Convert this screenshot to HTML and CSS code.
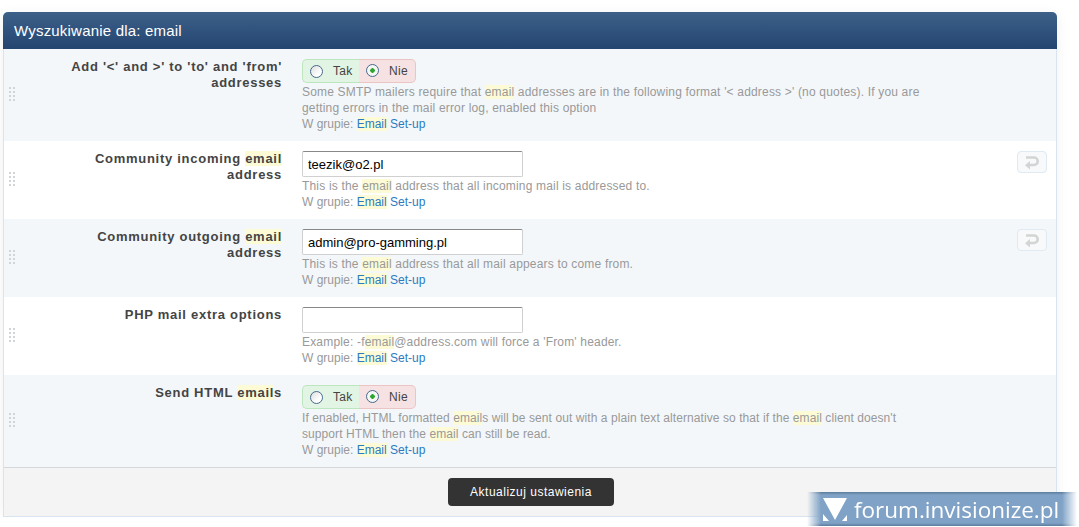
FILE: index.html
```html
<!DOCTYPE html>
<html lang="pl">
<head>
  <meta charset="UTF-8">
  <title>Wyszukiwanie dla: email</title>
  <link rel="stylesheet" href="styles.css">
</head>
<body>

  <div class="panel">
    <h2 class="naglowek">Wyszukiwanie dla: email</h2>

    <div class="wiersz parzysty">
      <svg class="uchwyt" width="6" height="14" viewBox="0 0 6 14"><path d="M0 0h2v2H0zM4 0h2v2H4zM0 4h2v2H0zM4 4h2v2H4zM0 8h2v2H0zM4 8h2v2H4zM0 12h2v2H0zM4 12h2v2H4z"/></svg>
      <div class="etykieta">Add '&lt;' and &gt;' to 'to' and 'from' addresses</div>
      <div class="pole">
        <div class="przelacznik">
          <label class="tak"><span class="radio"></span>Tak</label>
          <label class="nie"><span class="radio wybrany"></span>Nie</label>
        </div>
        <div class="opis">Some SMTP mailers require that <mark>email</mark> addresses are in the following format '&lt; address &gt;' (no quotes). If you are getting errors in the mail error log, enabled this option</div>
        <div class="opis grupa">W grupie: <a href="#"><mark>Email</mark> Set-up</a></div>
      </div>
    </div>

    <div class="wiersz">
      <svg class="uchwyt" width="6" height="14" viewBox="0 0 6 14"><path d="M0 0h2v2H0zM4 0h2v2H4zM0 4h2v2H0zM4 4h2v2H4zM0 8h2v2H0zM4 8h2v2H4zM0 12h2v2H0zM4 12h2v2H4z"/></svg>
      <div class="etykieta">Community incoming <mark>email</mark> address</div>
      <div class="pole">
        <input class="tekst" type="text" value="teezik@o2.pl">
        <div class="opis">This is the <mark>email</mark> address that all incoming mail is addressed to.</div>
        <div class="opis grupa">W grupie: <a href="#"><mark>Email</mark> Set-up</a></div>
      </div>
      <button class="cofnij"><svg width="16" height="15" viewBox="0 0 16 15"><path d="M2 2.500h8a3.500 3.500 0 0 1 0 7.500H5" fill="none" stroke="#d4d4d4" stroke-width="2.600"/><path d="M6 6v8.500L1 10.200z" fill="#d4d4d4"/></svg></button>
    </div>

    <div class="wiersz parzysty">
      <svg class="uchwyt" width="6" height="14" viewBox="0 0 6 14"><path d="M0 0h2v2H0zM4 0h2v2H4zM0 4h2v2H0zM4 4h2v2H4zM0 8h2v2H0zM4 8h2v2H4zM0 12h2v2H0zM4 12h2v2H4z"/></svg>
      <div class="etykieta">Community outgoing <mark>email</mark> address</div>
      <div class="pole">
        <input class="tekst" type="text" value="admin@pro-gamming.pl">
        <div class="opis">This is the <mark>email</mark> address that all mail appears to come from.</div>
        <div class="opis grupa">W grupie: <a href="#"><mark>Email</mark> Set-up</a></div>
      </div>
      <button class="cofnij"><svg width="16" height="15" viewBox="0 0 16 15"><path d="M2 2.500h8a3.500 3.500 0 0 1 0 7.500H5" fill="none" stroke="#d4d4d4" stroke-width="2.600"/><path d="M6 6v8.500L1 10.200z" fill="#d4d4d4"/></svg></button>
    </div>

    <div class="wiersz">
      <svg class="uchwyt" width="6" height="14" viewBox="0 0 6 14"><path d="M0 0h2v2H0zM4 0h2v2H4zM0 4h2v2H0zM4 4h2v2H4zM0 8h2v2H0zM4 8h2v2H4zM0 12h2v2H0zM4 12h2v2H4z"/></svg>
      <div class="etykieta">PHP mail extra options</div>
      <div class="pole">
        <input class="tekst" type="text" value="">
        <div class="opis">Example: -f<mark>email</mark>@address.com will force a 'From' header.</div>
        <div class="opis grupa">W grupie: <a href="#"><mark>Email</mark> Set-up</a></div>
      </div>
    </div>

    <div class="wiersz parzysty">
      <svg class="uchwyt" width="6" height="14" viewBox="0 0 6 14"><path d="M0 0h2v2H0zM4 0h2v2H4zM0 4h2v2H0zM4 4h2v2H4zM0 8h2v2H0zM4 8h2v2H4zM0 12h2v2H0zM4 12h2v2H4z"/></svg>
      <div class="etykieta">Send HTML <mark>email</mark>s</div>
      <div class="pole">
        <div class="przelacznik">
          <label class="tak"><span class="radio"></span>Tak</label>
          <label class="nie"><span class="radio wybrany"></span>Nie</label>
        </div>
        <div class="opis ciasny">If enabled, HTML formatted <mark>email</mark>s will be sent out with a plain text alternative so that if the <mark>email</mark> client doesn't support HTML then the <mark>email</mark> can still be read.</div>
        <div class="opis grupa">W grupie: <a href="#"><mark>Email</mark> Set-up</a></div>
      </div>
    </div>

    <div class="stopka">
      <button class="zapisz">Aktualizuj ustawienia</button>
    </div>
  </div>

  <!-- znak wodny -->
  <div class="znak">
    <svg width="24" height="23" viewBox="0 0 24 23"><path d="M0 0h24L12 22z" fill="#fff"/><path d="M0 16l6 7H0zM24 17l-5 6h5z" fill="#fff"/></svg>
    <span>forum.invisionize.pl</span>
  </div>

</body>
</html>
```

FILE: styles.css
```css
body {
  margin: 0;
  padding: 12px 0 0 3px;
  background-color: #fff;
  font-family: "Liberation Sans", Arial, sans-serif;
  font-size: 12px;
  color: #444;
}
mark {
  background-color: #fdfbd5;
  color: inherit;
}
.panel {
  width: 1054px;
  box-sizing: border-box;
  border: 1px solid #d8e5f1;
  border-top: 0;
  border-radius: 5px 5px 0 0;
  box-shadow: 0 2px 14px rgba(0, 0, 0, 0.06);
}
.naglowek {
  margin: 0 -1px;
  height: 37px;
  padding-left: 11px;
  font-size: 15px;
  font-weight: normal;
  line-height: 37px;
  letter-spacing: 0.2px;
  color: #fff;
  background: linear-gradient(#3d6089, #234570);
  border-radius: 5px 5px 0 0;
}
.wiersz {
  position: relative;
  display: flex;
  padding: 10px 0 9px;
  background-color: #fff;
}
.parzysty {
  background-color: #f3f7fa;
}
.uchwyt {
  position: absolute;
  left: 5px;
  top: 50%;
  margin-top: -8px;
  fill: #d2d5d8;
}
.etykieta {
  box-sizing: border-box;
  width: 278px;
  margin-right: 20px;
  padding-left: 58px;
  font-size: 13px;
  font-weight: bold;
  line-height: 16px;
  letter-spacing: 0.72px;
  text-align: right;
  color: #444;
}
.pole {
  width: 624px;
}
.przelacznik {
  display: flex;
  width: 114px;
  height: 24px;
  margin-bottom: 1px;
  color: #444;
  letter-spacing: 0.3px;
}
.przelacznik label {
  display: flex;
  align-items: center;
  box-sizing: border-box;
  height: 24px;
  width: 57px;
}
.przelacznik .tak {
  padding-left: 7px;
  background-color: #e2f4e3;
  border: 1px solid #bce6bd;
  border-right: 0;
  border-radius: 5px 0 0 5px;
}
.przelacznik .nie {
  padding-left: 7px;
  background-color: #f6e2e2;
  border: 1px solid #ebc4c4;
  border-left: 0;
  border-radius: 0 5px 5px 0;
}
.radio {
  box-sizing: border-box;
  flex: none;
  width: 13px;
  height: 13px;
  margin-right: 10px;
  border: 1.5px solid #46698f;
  border-radius: 50%;
  background: linear-gradient(135deg, #ddd, #fff 70%);
}
.przelacznik .wybrany {
  margin-top: -2px;
  background: radial-gradient(circle, #2fa52f 0 2px, #f4f7f4 2.500px);
}
.opis {
  line-height: 16px;
  letter-spacing: 0.18px;
  color: #999;
}
.ciasny {
  letter-spacing: 0.08px;
}
.grupa {
  letter-spacing: 0;
}
.opis a {
  color: #2b7bc0;
  text-decoration: none;
}
.tekst {
  display: block;
  box-sizing: border-box;
  width: 221px;
  height: 26px;
  margin: 0 0 1px;
  padding: 0 5px;
  border: 1px solid #d0d0d0;
  border-top-color: #888;
  border-radius: 2px;
  font-family: "Liberation Sans", Arial, sans-serif;
  font-size: 13px;
  color: #000;
  background-color: #fff;
}
.cofnij {
  position: absolute;
  right: 9px;
  top: 10px;
  display: flex;
  align-items: center;
  justify-content: center;
  width: 30px;
  height: 22px;
  padding: 0;
  border: 1px solid #dfeaf3;
  border-radius: 4px;
  background-color: #f7f9fb;
}
.stopka {
  display: flex;
  justify-content: center;
  padding: 10px 0 10px 2px;
  background-color: #f4f4f4;
  border-top: 1px solid #d5d8da;
}
.zapisz {
  width: 166px;
  height: 28px;
  padding: 0;
  border: 0;
  border-radius: 4px;
  font-family: "Liberation Sans", Arial, sans-serif;
  font-size: 12px;
  letter-spacing: 0.5px;
  color: #fff;
  background-color: #333;
}
.znak {
  position: absolute;
  left: 807px;
  top: 492px;
  display: flex;
  align-items: center;
  gap: 7px;
  box-sizing: border-box;
  width: 270px;
  height: 34px;
  padding-left: 16px;
  font-family: "Open Sans", sans-serif;
  font-size: 22.500px;
  color: #fff;
  background: linear-gradient(#5d7c9c, #7fa2c6 3px, #7fa2c6 31px, #5d7c9c);
  -webkit-mask-image: linear-gradient(90deg, transparent, #000 14px, #000 255px, transparent);
  mask-image: linear-gradient(90deg, transparent, #000 14px, #000 255px, transparent);
}
```
